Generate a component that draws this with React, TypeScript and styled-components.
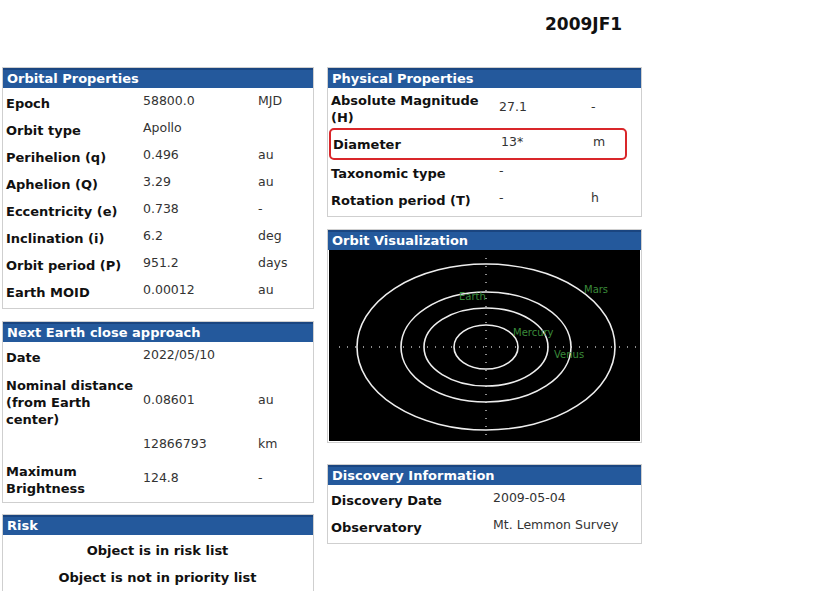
import styled, { createGlobalStyle } from "styled-components"

const Global = createGlobalStyle`
  body { margin: 0; background: #fff; font-family: "DejaVu Sans", Verdana, sans-serif; color: #111; }
`

const Page = styled.div`
  width: 824px;
  height: 591px;
  position: relative;
  overflow: hidden;
`

const Title = styled.h1`
  margin: 0;
  padding: 14px 0 0 545px;
  height: 67px;
  box-sizing: border-box;
  font-size: 17px;
  font-weight: bold;
`

const Columns = styled.div`
  display: flex;
  gap: 13px;
  padding-left: 2px;
`

const Column = styled.div<{ $w: number }>`
  width: ${p => p.$w}px;
  display: flex;
  flex-direction: column;
`

const Panel = styled.div<{ $mt?: number }>`
  border: 1px solid #cfcfcf;
  margin-top: ${p => p.$mt ?? 0}px;
`

const Head = styled.div`
  background: #24599c;
  border-top: 2px solid #1a4580;
  color: #fff;
  font-weight: bold;
  font-size: 13px;
  height: 18px;
  line-height: 18px;
  padding-left: 4px;
`

const Body = styled.div`
  padding: 2px 4px 2px 3px;
`

const Row = styled.div<{ $h?: number; $cols: string; $boxed?: boolean }>`
  display: grid;
  grid-template-columns: ${p => p.$cols};
  align-items: center;
  min-height: ${p => p.$h ?? 27}px;
  font-size: 13px;
  ${p => p.$boxed && `
    border: 2.5px solid #d9262a;
    border-radius: 5px;
    margin: 0 10px 0 -2px;
    padding-left: 2px;
    min-height: 28px;
  `}
`

const Label = styled.span`
  font-weight: bold;
  line-height: 17px;
`

const Val = styled.span<{ $up?: boolean }>`
  color: #333;
  font-size: 12.5px;
  align-self: ${p => (p.$up ? "start" : "center")};
  margin-top: ${p => (p.$up ? 4 : -6)}px;
`

const Centered = styled.div`
  text-align: center;
  font-weight: bold;
  font-size: 13px;
  line-height: 27px;
`

const Black = styled.div`
  background: #000;
  height: 191px;
  margin: 0 1px 1px;
`

type R = [string, string, string, number?]

const leftCols = "137px 115px 1fr"
const rightCols = "168px 92px 1fr"

const orbital: R[] = [
  ["Epoch", "58800.0", "MJD"],
  ["Orbit type", "Apollo", ""],
  ["Perihelion (q)", "0.496", "au"],
  ["Aphelion (Q)", "3.29", "au"],
  ["Eccentricity (e)", "0.738", "-"],
  ["Inclination (i)", "6.2", "deg"],
  ["Orbit period (P)", "951.2", "days"],
  ["Earth MOID", "0.00012", "au"],
]

const Rows = ({ rows, cols }: { rows: R[]; cols: string }) => (
  <>
    {rows.map(([l, v, u, h], i) => (
      <Row key={i} $cols={cols} $h={h}>
        <Label>{l}</Label>
        <Val>{v}</Val>
        <Val>{u}</Val>
      </Row>
    ))}
  </>
)

const Orbit = () => (
  <svg width="313" height="191" viewBox="0 0 313 191">
    <g stroke="#bbb" strokeWidth="1.5" strokeDasharray="1 7">
      <line x1="10" y1="97" x2="313" y2="97" />
      <line x1="157" y1="8" x2="157" y2="190" />
    </g>
    <g fill="none" stroke="#eee" strokeWidth="1.6">
      <ellipse cx="157" cy="97" rx="129" ry="83" />
      <ellipse cx="157" cy="97" rx="85" ry="55" />
      <ellipse cx="157" cy="97" rx="62" ry="39" />
      <ellipse cx="157" cy="97" rx="32" ry="22" />
    </g>
    <g fill="#3a8a3a" fontSize="10" fontFamily="DejaVu Sans, sans-serif">
      <text x="130" y="50">Earth</text>
      <text x="255" y="43">Mars</text>
      <text x="184" y="86">Mercury</text>
      <text x="225" y="108">Venus</text>
    </g>
  </svg>
)

export default function App() {
  return (
    <Page>
      <Global />
      <Title>2009JF1</Title>
      <Columns>
        <Column $w={312}>
          <Panel>
            <Head>Orbital Properties</Head>
            <Body>
              <Rows rows={orbital} cols={leftCols} />
            </Body>
          </Panel>
          <Panel $mt={12}>
            <Head>Next Earth close approach</Head>
            <Body>
              <Rows rows={[["Date", "2022/05/10", ""]]} cols={leftCols} />
              <Row $cols={leftCols} $h={62}>
                <Label>Nominal distance<br />(from Earth<br />center)</Label>
                <Val>0.08601</Val>
                <Val>au</Val>
              </Row>
              <Rows rows={[["", "12866793", "km"]]} cols={leftCols} />
              <Row $cols={leftCols} $h={40}>
                <Label>Maximum<br />Brightness</Label>
                <Val>124.8</Val>
                <Val>-</Val>
              </Row>
            </Body>
          </Panel>
          <Panel $mt={11}>
            <Head>Risk</Head>
            <Body>
              <Centered>Object is in risk list</Centered>
              <Centered>Object is not in priority list</Centered>
            </Body>
          </Panel>
        </Column>
        <Column $w={315}>
          <Panel>
            <Head>Physical Properties</Head>
            <Body>
              <Row $cols={rightCols} $h={38}>
                <Label>Absolute Magnitude<br />(H)</Label>
                <Val>27.1</Val>
                <Val>-</Val>
              </Row>
              <Row $cols={rightCols} $boxed>
                <Label>Diameter</Label>
                <Val>13*</Val>
                <Val>m</Val>
              </Row>
              <Rows rows={[["Taxonomic type", "-", ""], ["Rotation period (T)", "-", "h"]]} cols={rightCols} />
            </Body>
          </Panel>
          <Panel $mt={12}>
            <Head>Orbit Visualization</Head>
            <Black><Orbit /></Black>
          </Panel>
          <Panel $mt={21}>
            <Head>Discovery Information</Head>
            <Body>
              <Rows rows={[["Discovery Date", "2009-05-04", ""], ["Observatory", "Mt. Lemmon Survey", ""]]} cols="162px 1fr 0px" />
            </Body>
          </Panel>
        </Column>
      </Columns>
    </Page>
  )
}
